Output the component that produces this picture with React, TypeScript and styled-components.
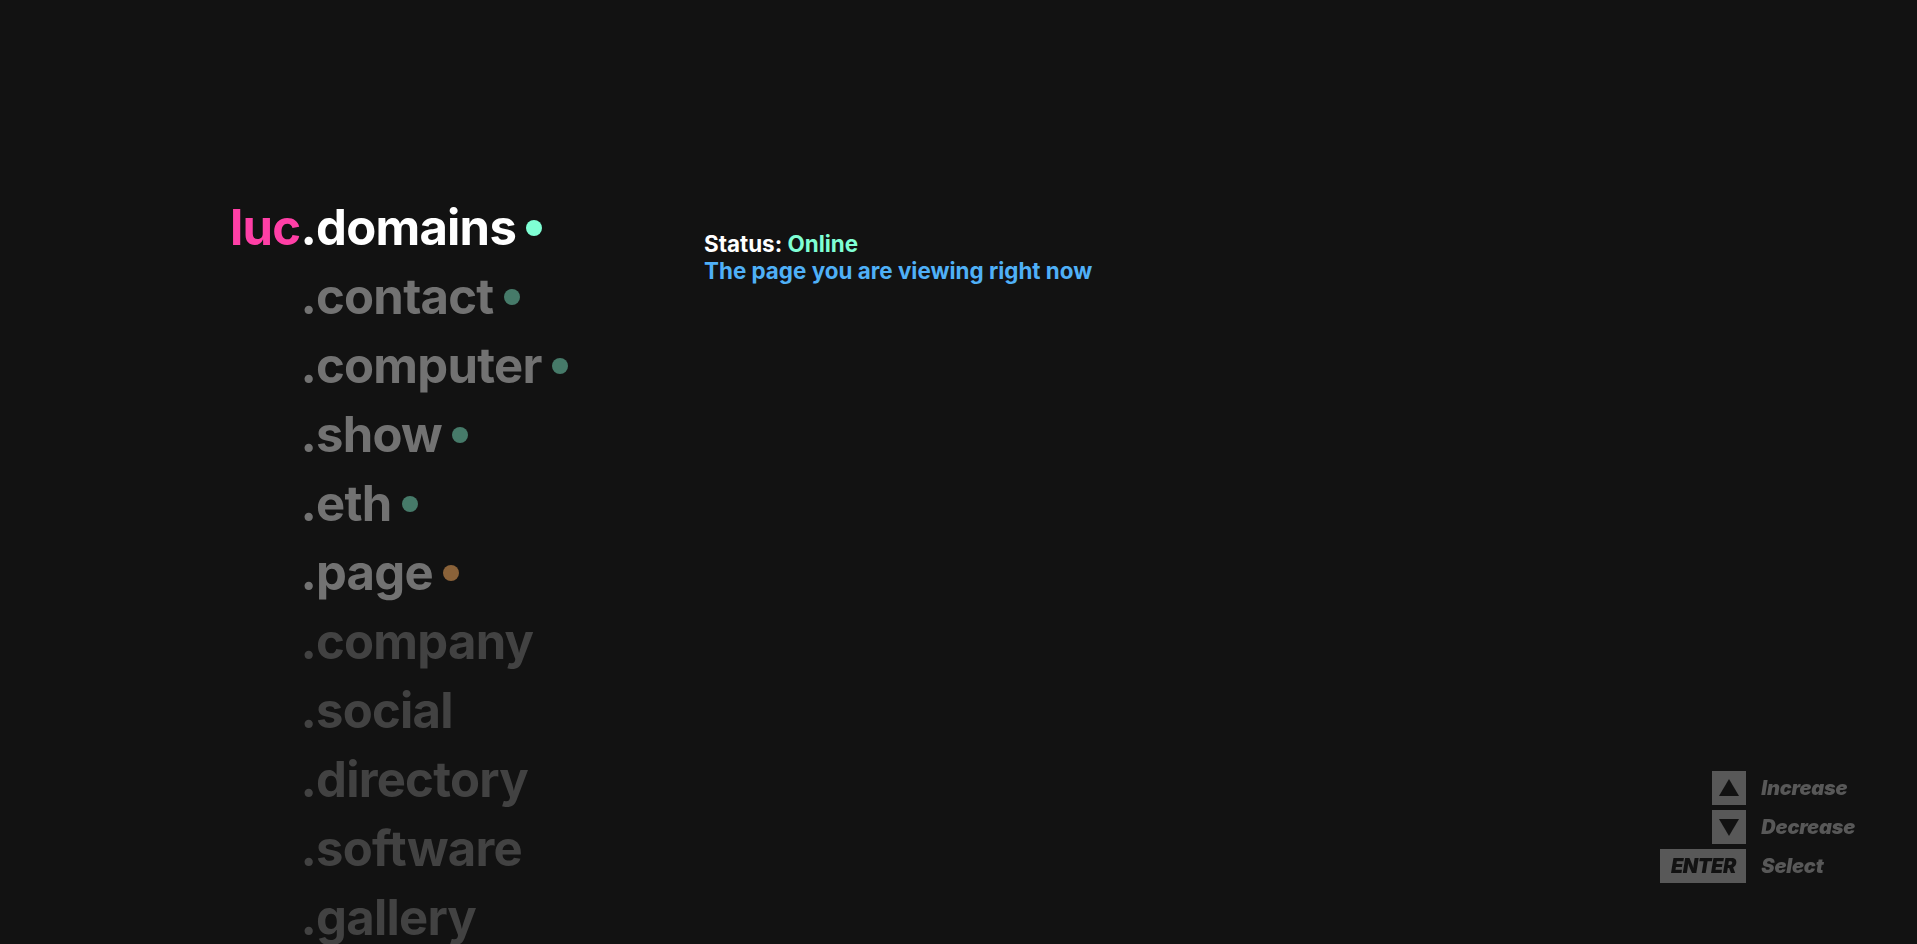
import React from "react";
import styled, { createGlobalStyle } from "styled-components";

const GlobalStyle = createGlobalStyle`
  html, body {
    margin: 0;
    padding: 0;
    background: #121212;
    height: 100%;
    overflow: hidden;
  }
  body {
    font-family: Inter, "Noto Sans", sans-serif;
    color: #ffffff;
  }
`;

const Page = styled.main`
  height: 100vh;
  box-sizing: border-box;
  padding: 193px 0 0 230px;
  display: grid;
  grid-template-columns: 474px 1fr;
  align-items: start;
`;

const Brand = styled.div`
  display: flex;
  align-items: flex-start;
  font-size: 49px;
  font-weight: 700;
  letter-spacing: -0.75px;
`;

const Owner = styled.span`
  color: #ff3fa6;
  line-height: 69px;
`;

const DomainList = styled.ul`
  list-style: none;
  margin: 0;
  padding: 0;
  display: flex;
  flex-direction: column;
`;

type Tone = "active" | "mid" | "dim";

const toneColor: Record<Tone, string> = {
  active: "#ffffff",
  mid: "#727272",
  dim: "#424242",
};

const DomainRow = styled.li<{ $tone: Tone }>`
  display: flex;
  align-items: center;
  height: 69px;
  color: ${(p) => toneColor[p.$tone]};
`;

const Dot = styled.span<{ $color: string }>`
  width: 16px;
  height: 16px;
  border-radius: 50%;
  margin-left: 10px;
  background: ${(p) => p.$color};
`;

const Status = styled.section`
  padding-top: 37px;
  font-size: 22.4px;
  font-weight: 700;
  line-height: 27px;
`;

const StatusLine = styled.div<{ $color: string }>`
  color: ${(p) => p.$color};
`;

const Online = styled.span`
  color: #7fffd4;
`;

const Legend = styled.div`
  position: fixed;
  right: 62px;
  bottom: 61px;
  display: grid;
  grid-template-columns: auto auto;
  column-gap: 15px;
  row-gap: 5px;
  align-items: center;
`;

const Key = styled.div<{ $wide?: boolean }>`
  justify-self: end;
  height: 34px;
  width: ${(p) => (p.$wide ? "86px" : "34px")};
  background: #585858;
  display: flex;
  align-items: center;
  justify-content: center;
  color: #121212;
  font-style: italic;
  font-weight: 900;
  font-size: 20px;
  letter-spacing: -0.5px;
`;

const KeyLabel = styled.span`
  color: #585858;
  font-style: italic;
  font-weight: 900;
  font-size: 20px;
  letter-spacing: -0.2px;
`;

const Arrow = ({ down }: { down?: boolean }) => (
  <svg width="22" height="20" viewBox="0 0 22 20">
    <polygon
      points={down ? "1,2 21,2 11,19" : "11,1 21,18 1,18"}
      fill="#121212"
    />
  </svg>
);

const domains: { name: string; tone: Tone; dot?: string }[] = [
  { name: ".domains", tone: "active", dot: "#7fffd4" },
  { name: ".contact", tone: "mid", dot: "#467a69" },
  { name: ".computer", tone: "mid", dot: "#467a69" },
  { name: ".show", tone: "mid", dot: "#467a69" },
  { name: ".eth", tone: "mid", dot: "#467a69" },
  { name: ".page", tone: "mid", dot: "#8a6239" },
  { name: ".company", tone: "dim" },
  { name: ".social", tone: "dim" },
  { name: ".directory", tone: "dim" },
  { name: ".software", tone: "dim" },
  { name: ".gallery", tone: "dim" },
];

export default function App() {
  return (
    <>
      <GlobalStyle />
      <Page>
        <Brand>
          <Owner>luc</Owner>
          <DomainList>
            {domains.map((d) => (
              <DomainRow key={d.name} $tone={d.tone}>
                {d.name}
                {d.dot && <Dot $color={d.dot} />}
              </DomainRow>
            ))}
          </DomainList>
        </Brand>
        <Status>
          <StatusLine $color="#ffffff">
            Status: <Online>Online</Online>
          </StatusLine>
          <StatusLine $color="#4fb0f7">The page you are viewing right now</StatusLine>
        </Status>
      </Page>
      <Legend>
        <Key>
          <Arrow />
        </Key>
        <KeyLabel>Increase</KeyLabel>
        <Key>
          <Arrow down />
        </Key>
        <KeyLabel>Decrease</KeyLabel>
        <Key $wide>ENTER</Key>
        <KeyLabel>Select</KeyLabel>
      </Legend>
    </>
  );
}
